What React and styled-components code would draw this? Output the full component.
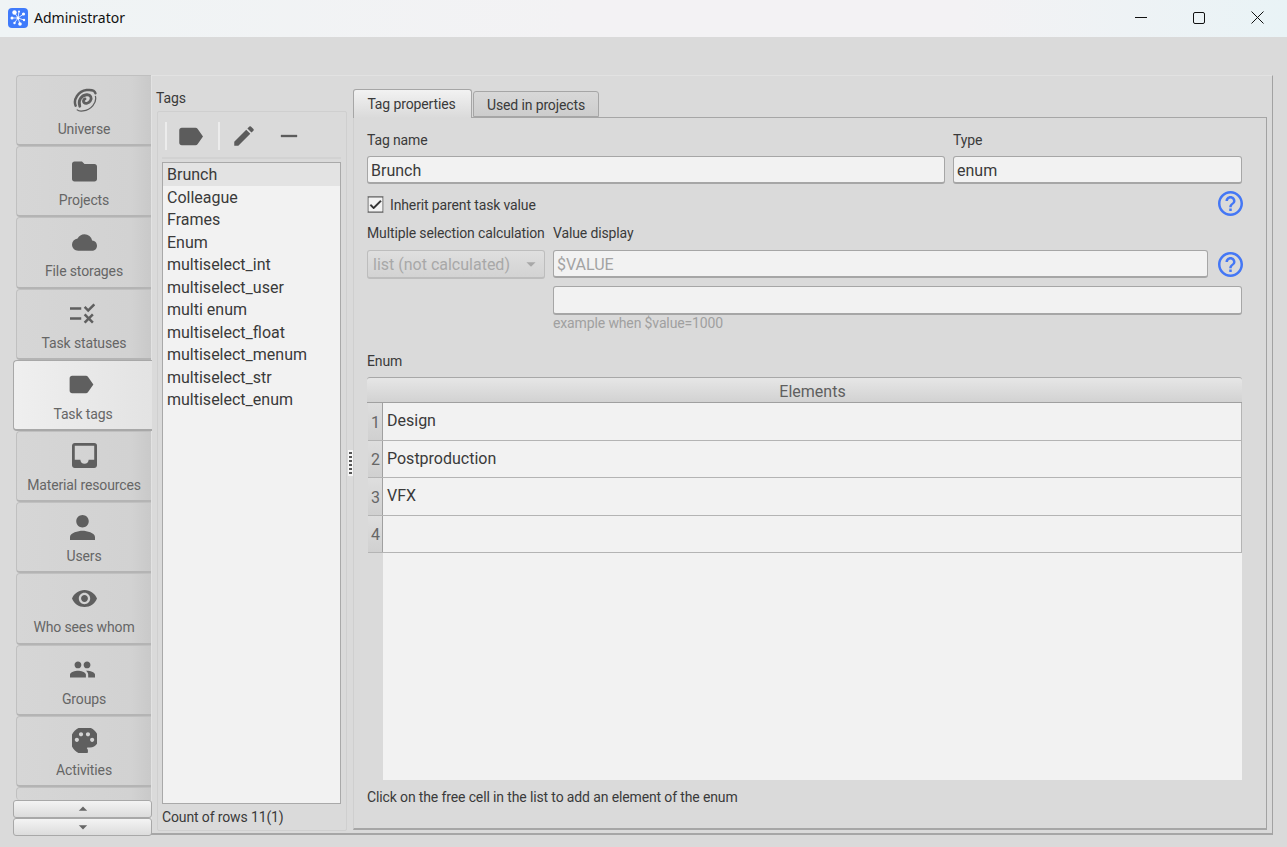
import React from "react";
import styled, { createGlobalStyle } from "styled-components";
import {
  MdLabel, MdFolder, MdCloud, MdRule, MdPerson, MdVisibility, MdPeople, MdPalette,
  MdEdit, MdRemove, MdHelpOutline, MdCheck, MdArrowDropDown, MdArrowDropUp, MdInbox,
} from "react-icons/md";

const Global = createGlobalStyle`
  html, body { margin: 0; padding: 0; height: 100%; overflow: hidden; background: #dadada; }
  * { box-sizing: border-box; }
  body { font-family: Roboto, "Liberation Sans", sans-serif; font-size: 14px; letter-spacing: -0.13px; color: #3a3a3a; }
`;

const Window = styled.div`
  width: 1287px;
  height: 847px;
  display: flex;
  flex-direction: column;
  background: #dadada;
  overflow: hidden;
`;

const TitleBar = styled.div`
  height: 37px;
  flex: none;
  display: flex;
  align-items: center;
  padding: 0 0 2px 8px;
  background: linear-gradient(90deg, #eff4f5 0%, #f3f2f4 45%, #f3f2f4 75%, #e9f3f6 100%);
`;

const AppIcon = styled.svg`
  width: 20px;
  height: 20px;
  margin-right: 6px;
`;

const TitleText = styled.div`
  flex: 1;
  font-family: "Noto Sans", sans-serif;
  font-size: 14px;
  letter-spacing: 0;
  color: #111;
`;

const WinButton = styled.div`
  width: 58.5px;
  height: 35px;
  display: flex;
  align-items: center;
  justify-content: center;
  color: #111;
`;

const WinControls = styled.div`
  display: flex;
`;

const Main = styled.div`
  flex: 1;
  display: flex;
  padding: 38px 14px 12px 16px;
  position: relative;
  min-height: 0;
`;

const Sidebar = styled.div`
  width: 135px;
  flex: none;
  display: flex;
  flex-direction: column;
  position: relative;
  z-index: 1;
`;

const NavItem = styled.div`
  height: ${(p) => (p.$stub ? "13px" : "71.2px")};
  flex: none;
  display: flex;
  flex-direction: column;
  align-items: center;
  padding-top: 11.5px;
  border: 1px solid #c0c0c0;
  border-bottom: ${(p) => (p.$stub ? "none" : "2px solid #b4b4b4")};
  border-right: none;
  border-radius: 4px 0 0 4px;
  background: linear-gradient(90deg, #d6d6d6 0%, #d2d2d2 85%, #c9c9c9 100%);
  ${(p) =>
    p.$active &&
    `margin: 0 -1px 0 -3px;
     border-color: #a8a8a8;
     border-bottom-color: #a8a8a8;
     background: linear-gradient(90deg, #efefef, #e3e3e3);`}
  svg {
    flex: none;
    display: block;
    color: #5f5f5f;
    margin-left: ${(p) => (p.$left ? "-4px" : "0")};
  }
`;

const NavLabel = styled.div`
  margin-top: 8.5px;
  line-height: 17px;
  white-space: nowrap;
  color: #666;
`;

const ScrollButtons = styled.div`
  position: absolute;
  left: 13px;
  top: 763px;
  width: 139px;
  z-index: 3;
`;

const ScrollButton = styled.div`
  height: 18px;
  display: flex;
  align-items: center;
  justify-content: center;
  border: 1px solid #a8a8a8;
  border-radius: 3px;
  background: linear-gradient(180deg, #f4f4f4, #dcdcdc);
  color: #666;
`;

const Pane = styled.div`
  flex: 1;
  min-width: 0;
  display: flex;
  border-top: 1px solid #e2e2e2;
  border-right: 1px solid #a2a2a2;
  border-bottom: 2px solid #a6a6a6;
  height: 760px;
`;

const TagsColumn = styled.div`
  width: 196px;
  flex: none;
  display: flex;
  flex-direction: column;
  padding-left: 4px;
  border-left: 1px solid #e2e2e2;
`;

const TagsHeading = styled.div`
  margin-top: 14px;
  height: 17px;
  line-height: 17px;
  color: #3a3a3a;
`;

const TagsBox = styled.div`
  margin: 4px 0 2px 1px;
  flex: 1;
  display: flex;
  flex-direction: column;
  border: 1px solid #cfcfcf;
  border-radius: 2px;
  padding: 0 5px 0 4px;
  min-height: 0;
`;

const Toolbar = styled.div`
  height: 47px;
  flex: none;
  display: flex;
  align-items: center;
  padding: 3px 0 0 3px;
  border-bottom: 2px solid #d2d2d2;
  color: #5c5c5c;
`;

const ToolSep = styled.div`
  width: 2px;
  height: 28px;
  margin-left: ${(p) => p.$gap || 0}px;
  background: #ececec;
`;

const ToolButton = styled.div`
  width: ${(p) => p.$w}px;
  height: 28px;
  display: flex;
  align-items: center;
  justify-content: center;
`;

const TagList = styled.div`
  margin-top: 3px;
  flex: 1;
  border: 1px solid #a9a9a9;
  background: #f2f2f2;
  min-height: 0;
`;

const TagRow = styled.div`
  height: 22.5px;
  line-height: 24.5px;
  padding-left: 4px;
  font-size: 16px;
  letter-spacing: 0;
  color: #3a3a3a;
  background: ${(p) => (p.$selected ? "#e3e3e3" : "transparent")};
`;

const RowCount = styled.div`
  height: 26px;
  flex: none;
  line-height: 27px;
  color: #3a3a3a;
`;

const Splitter = styled.div`
  width: 6px;
  flex: none;
  display: flex;
  align-items: center;
  justify-content: center;
  padding-top: 16px;
`;

const SplitHandle = styled.div`
  width: 5px;
  height: 26px;
  background: #f6f6f6;
  display: flex;
  flex-direction: column;
  align-items: center;
  justify-content: space-between;
  padding: 2px 0;
`;

const SplitDot = styled.div`
  width: 3px;
  height: 2px;
  background: #555;
`;

const RightColumn = styled.div`
  width: 914px;
  flex: none;
  display: flex;
  flex-direction: column;
  padding-top: 13px;
  height: 754px;
`;

const TabRow = styled.div`
  height: 28px;
  flex: none;
  display: flex;
  align-items: flex-end;
  position: relative;
  z-index: 1;
`;

const PropTab = styled.div`
  width: ${(p) => p.$w}px;
  height: ${(p) => (p.$active ? "29px" : "26px")};
  margin-bottom: ${(p) => (p.$active ? "-1px" : "0")};
  margin-right: 1px;
  padding: ${(p) => (p.$active ? "0 2px 0 0" : "2px 0 0 0")};
  display: flex;
  align-items: center;
  justify-content: center;
  color: #3a3a3a;
  border: 1px solid #a6a6a6;
  border-bottom: ${(p) => (p.$active ? "none" : "1px solid #a6a6a6")};
  border-radius: 3px 3px 0 0;
  background: ${(p) => (p.$active ? "linear-gradient(180deg, #f2f2f2, #dadada)" : "linear-gradient(180deg, #d8d8d8, #cdcdcd)")};
`;

const TabPage = styled.div`
  flex: 1;
  min-height: 0;
  display: flex;
  flex-direction: column;
  padding: 0 24px 0 13px;
  border-top: 1px solid #a6a6a6;
  border-right: 1px solid #a2a2a2;
  border-bottom: 2px solid #a6a6a6;
  border-left: 1px solid #cfcfcf;
`;

const FieldLabel = styled.div`
  height: 17px;
  line-height: 17px;
  color: #3a3a3a;
  white-space: nowrap;
`;

const NameGrid = styled.div`
  margin-top: 14px;
  display: grid;
  grid-template-columns: 578px 289px;
  column-gap: 8px;
  row-gap: 7px;
`;

const TextInput = styled.div`
  height: ${(p) => p.$h || 28}px;
  display: flex;
  align-items: center;
  padding: 1px 0 0 3px;
  font-size: 16px;
  letter-spacing: 0;
  color: ${(p) => (p.$muted ? "#a3a3a3" : "#3a3a3a")};
  background: #f2f2f2;
  border: 1px solid #a6a6a6;
  border-bottom-width: 2px;
  border-radius: 3px;
`;

const InheritRow = styled.div`
  margin-top: 7px;
  height: 26px;
  display: flex;
  align-items: flex-start;
  justify-content: space-between;
`;

const CheckLabel = styled.div`
  display: flex;
  align-items: center;
  margin-top: 5px;
  gap: 6px;
  color: #3a3a3a;
`;

const CheckBox = styled.div`
  width: 17px;
  height: 17px;
  display: flex;
  align-items: center;
  justify-content: center;
  background: #f2f2f2;
  border: 1px solid #b4b4b4;
  color: #2a2a2a;
`;

const HelpIcon = styled(MdHelpOutline).attrs({ viewBox: "2 2 20 20", size: 25 })`
  color: #4477f5;
  display: block;
  flex: none;
  margin-right: -1px;
`;

const DisplayGrid = styled.div`
  margin-top: 8px;
  display: grid;
  grid-template-columns: 178px 1fr;
  column-gap: 8px;
`;

const Combo = styled.div`
  height: 29px;
  margin-top: 8px;
  display: flex;
  align-items: center;
  justify-content: space-between;
  padding: 0 2px 0 5px;
  font-size: 16px;
  letter-spacing: 0;
  color: #a8a8a8;
  border: 1px solid #bdbdbd;
  border-bottom-width: 2px;
  border-radius: 3px;
  background: linear-gradient(180deg, #dfdfdf, #d3d3d3);
`;

const ValueColumn = styled.div`
  display: flex;
  flex-direction: column;
`;

const ValueRow = styled.div`
  margin-top: 8px;
  display: flex;
  align-items: center;
  justify-content: space-between;
  > :first-child { width: 655px; }
`;

const SecondInput = styled.div`
  margin-top: 8px;
`;

const Hint = styled.div`
  height: 17px;
  line-height: 17px;
  color: #a0a0a0;
`;

const EnumHeading = styled(FieldLabel)`
  margin-top: 21px;
`;

const ElementsTable = styled.div`
  margin-top: 7px;
  flex: 1;
  min-height: 0;
  display: flex;
  flex-direction: column;
`;

const TableHead = styled.div`
  height: 26px;
  flex: none;
  display: flex;
  align-items: center;
  justify-content: center;
  padding: 3px 0 0 16px;
  font-size: 16px;
  letter-spacing: 0;
  color: #5f5f5f;
  border-top: 1px solid #a8a8a8;
  border-bottom: 1px solid #a0a0a0;
  border-radius: 3px 3px 0 0;
  background: linear-gradient(180deg, #e6e6e6, #d2d2d2);
`;

const TableBody = styled.div`
  flex: 1;
  min-height: 0;
  background: linear-gradient(90deg, #dadada 16px, #f2f2f2 16px);
`;

const TableRow = styled.div`
  height: 37.5px;
  display: flex;
  margin-left: 1px;
  border-bottom: 1px solid #b4b4b4;
  border-right: 1px solid #b4b4b4;
`;

const RowHead = styled.div`
  width: 15px;
  flex: none;
  display: flex;
  align-items: center;
  justify-content: flex-end;
  padding: 2px 2px 0 0;
  font-size: 16px;
  letter-spacing: 0;
  color: #666;
  border-right: 1px solid #a0a0a0;
  background: linear-gradient(180deg, #dedede, #d0d0d0);
`;

const Cell = styled.div`
  flex: 1;
  padding: 7px 0 0 4px;
  font-size: 16px;
  letter-spacing: 0;
  line-height: 22px;
  color: #3a3a3a;
`;

const NoteText = styled.div`
  height: 48px;
  flex: none;
  padding-top: 9px;
  line-height: 17px;
  color: #3a3a3a;
`;

function UniverseIcon() {
  return (
    <svg width="25" height="25" viewBox="0 0 24 24" fill="none" stroke="currentColor" strokeLinecap="round">
      <path d="M3.5 17C1 11 6 3 14 2c5-.6 8 1 8.5 3" strokeWidth="2.4" />
      <path d="M22.5 8c1.5 6-4 13-12 14-2.5.3-4.5 0-5.5-1" strokeWidth="1.2" />
      <path d="M7.5 17.5C5.5 12 9 7 14 6.5c4-.4 5.5 3 3.5 6-1.5 2.2-4.5 3-6 1.5-1-1-.5-3 1-3.5" strokeWidth="2.7" />
    </svg>
  );
}

function Logo() {
  const nodes = [[6.5, 4.5, 2.2], [11, 3.5, 1], [15.5, 6, 1.6], [16, 12, 1.2], [12, 16, 1.8], [6.5, 15, 1.2], [4, 10, 1.5]];
  return (
    <AppIcon viewBox="0 0 20 20">
      <rect width="20" height="20" rx="4" fill="#3f7bfb" />
      {nodes.map(([x, y, r]) => (
        <g key={`${x}-${y}`}>
          <line x1="10" y1="10" x2={x} y2={y} stroke="#fff" strokeWidth="0.8" />
          <circle cx={x} cy={y} r={r} fill="#fff" />
        </g>
      ))}
      <circle cx="10" cy="10" r="1.4" fill="#fff" />
    </AppIcon>
  );
}

const navItems = [
  { label: "Universe", icon: <UniverseIcon /> },
  { label: "Projects", icon: <MdFolder size={25} viewBox="2 2 20 20" /> },
  { label: "File storages", icon: <MdCloud size={25} /> },
  { label: "Task statuses", icon: <MdRule size={25} viewBox="2 2 20 20" />, left: true },
  { label: "Task tags", icon: <MdLabel size={25} viewBox="2.5 2 20 20" />, active: true, left: true },
  { label: "Material resources", icon: <MdInbox size={25} viewBox="3 3 18 18" /> },
  { label: "Users", icon: <MdPerson size={25} viewBox="4 4 16 16" />, left: true },
  { label: "Who sees whom", icon: <MdVisibility size={25} viewBox="1 1 22 22" /> },
  { label: "Groups", icon: <MdPeople size={25} viewBox="1 1 22 22" />, left: true },
  { label: "Activities", icon: <MdPalette size={25} viewBox="3 3 18 18" /> },
  { label: "", icon: null, stub: true },
];

const tags = [
  "Brunch", "Colleague", "Frames", "Enum", "multiselect_int", "multiselect_user",
  "multi enum", "multiselect_float", "multiselect_menum", "multiselect_str", "multiselect_enum",
];

const elements = ["Design", "Postproduction", "VFX", ""];

export default function App() {
  return (
    <Window>
      <Global />
      <TitleBar>
        <Logo />
        <TitleText>Administrator</TitleText>
        <WinControls>
          <WinButton>
            <svg width="12" height="12" viewBox="0 0 12 12"><line x1="0" y1="5.5" x2="12" y2="5.5" stroke="#111" /></svg>
          </WinButton>
          <WinButton>
            <svg width="12" height="12" viewBox="0 0 12 12"><rect x="0.5" y="0.5" width="11" height="11" rx="1.5" fill="none" stroke="#111" /></svg>
          </WinButton>
          <WinButton>
            <svg width="13" height="13" viewBox="0 0 13 13"><path d="M.5.5l12 12M12.5.5l-12 12" stroke="#111" fill="none" /></svg>
          </WinButton>
        </WinControls>
      </TitleBar>
      <Main>
        <Sidebar>
          {navItems.map((item, i) => (
            <NavItem key={i} $active={item.active} $stub={item.stub} $left={item.left}>
              {item.icon}
              {item.label && <NavLabel>{item.label}</NavLabel>}
            </NavItem>
          ))}
        </Sidebar>
        <ScrollButtons>
          <ScrollButton><MdArrowDropUp size={20} /></ScrollButton>
          <ScrollButton><MdArrowDropDown size={20} /></ScrollButton>
        </ScrollButtons>
        <Pane>
          <TagsColumn>
            <TagsHeading>Tags</TagsHeading>
            <TagsBox>
              <Toolbar>
                <ToolSep />
                <ToolButton $w={46}><MdLabel size={25} viewBox="2 2 20 20" /></ToolButton>
                <ToolSep $gap={5} />
                <ToolButton $w={47}><MdEdit size={26} /></ToolButton>
                <ToolButton $w={43}><MdRemove size={28} /></ToolButton>
              </Toolbar>
              <TagList>
                {tags.map((t, i) => (
                  <TagRow key={t} $selected={i === 0}>{t}</TagRow>
                ))}
              </TagList>
              <RowCount>Count of rows 11(1)</RowCount>
            </TagsBox>
          </TagsColumn>
          <Splitter>
            <SplitHandle>
              {[0, 1, 2, 3, 4, 5].map((d) => <SplitDot key={d} />)}
            </SplitHandle>
          </Splitter>
          <RightColumn>
            <TabRow>
              <PropTab $w={119} $active>Tag properties</PropTab>
              <PropTab $w={126}>Used in projects</PropTab>
            </TabRow>
            <TabPage>
              <NameGrid>
                <FieldLabel>Tag name</FieldLabel>
                <FieldLabel>Type</FieldLabel>
                <TextInput>Brunch</TextInput>
                <TextInput>enum</TextInput>
              </NameGrid>
              <InheritRow>
                <CheckLabel>
                  <CheckBox><MdCheck size={17} stroke="currentColor" strokeWidth={1.2} /></CheckBox>
                  Inherit parent task value
                </CheckLabel>
                <HelpIcon />
              </InheritRow>
              <DisplayGrid>
                <div>
                  <FieldLabel>Multiple selection calculation</FieldLabel>
                  <Combo>
                    list (not calculated)
                    <MdArrowDropDown size={22} />
                  </Combo>
                </div>
                <ValueColumn>
                  <FieldLabel>Value display</FieldLabel>
                  <ValueRow>
                    <TextInput $muted>$VALUE</TextInput>
                    <HelpIcon />
                  </ValueRow>
                  <SecondInput><TextInput $h={29} /></SecondInput>
                  <Hint>example when $value=1000</Hint>
                </ValueColumn>
              </DisplayGrid>
              <EnumHeading>Enum</EnumHeading>
              <ElementsTable>
                <TableHead>Elements</TableHead>
                <TableBody>
                  {elements.map((e, i) => (
                    <TableRow key={i}>
                      <RowHead>{i + 1}</RowHead>
                      <Cell>{e}</Cell>
                    </TableRow>
                  ))}
                </TableBody>
              </ElementsTable>
              <NoteText>Click on the free cell in the list to add an element of the enum</NoteText>
            </TabPage>
          </RightColumn>
        </Pane>
      </Main>
    </Window>
  );
}
